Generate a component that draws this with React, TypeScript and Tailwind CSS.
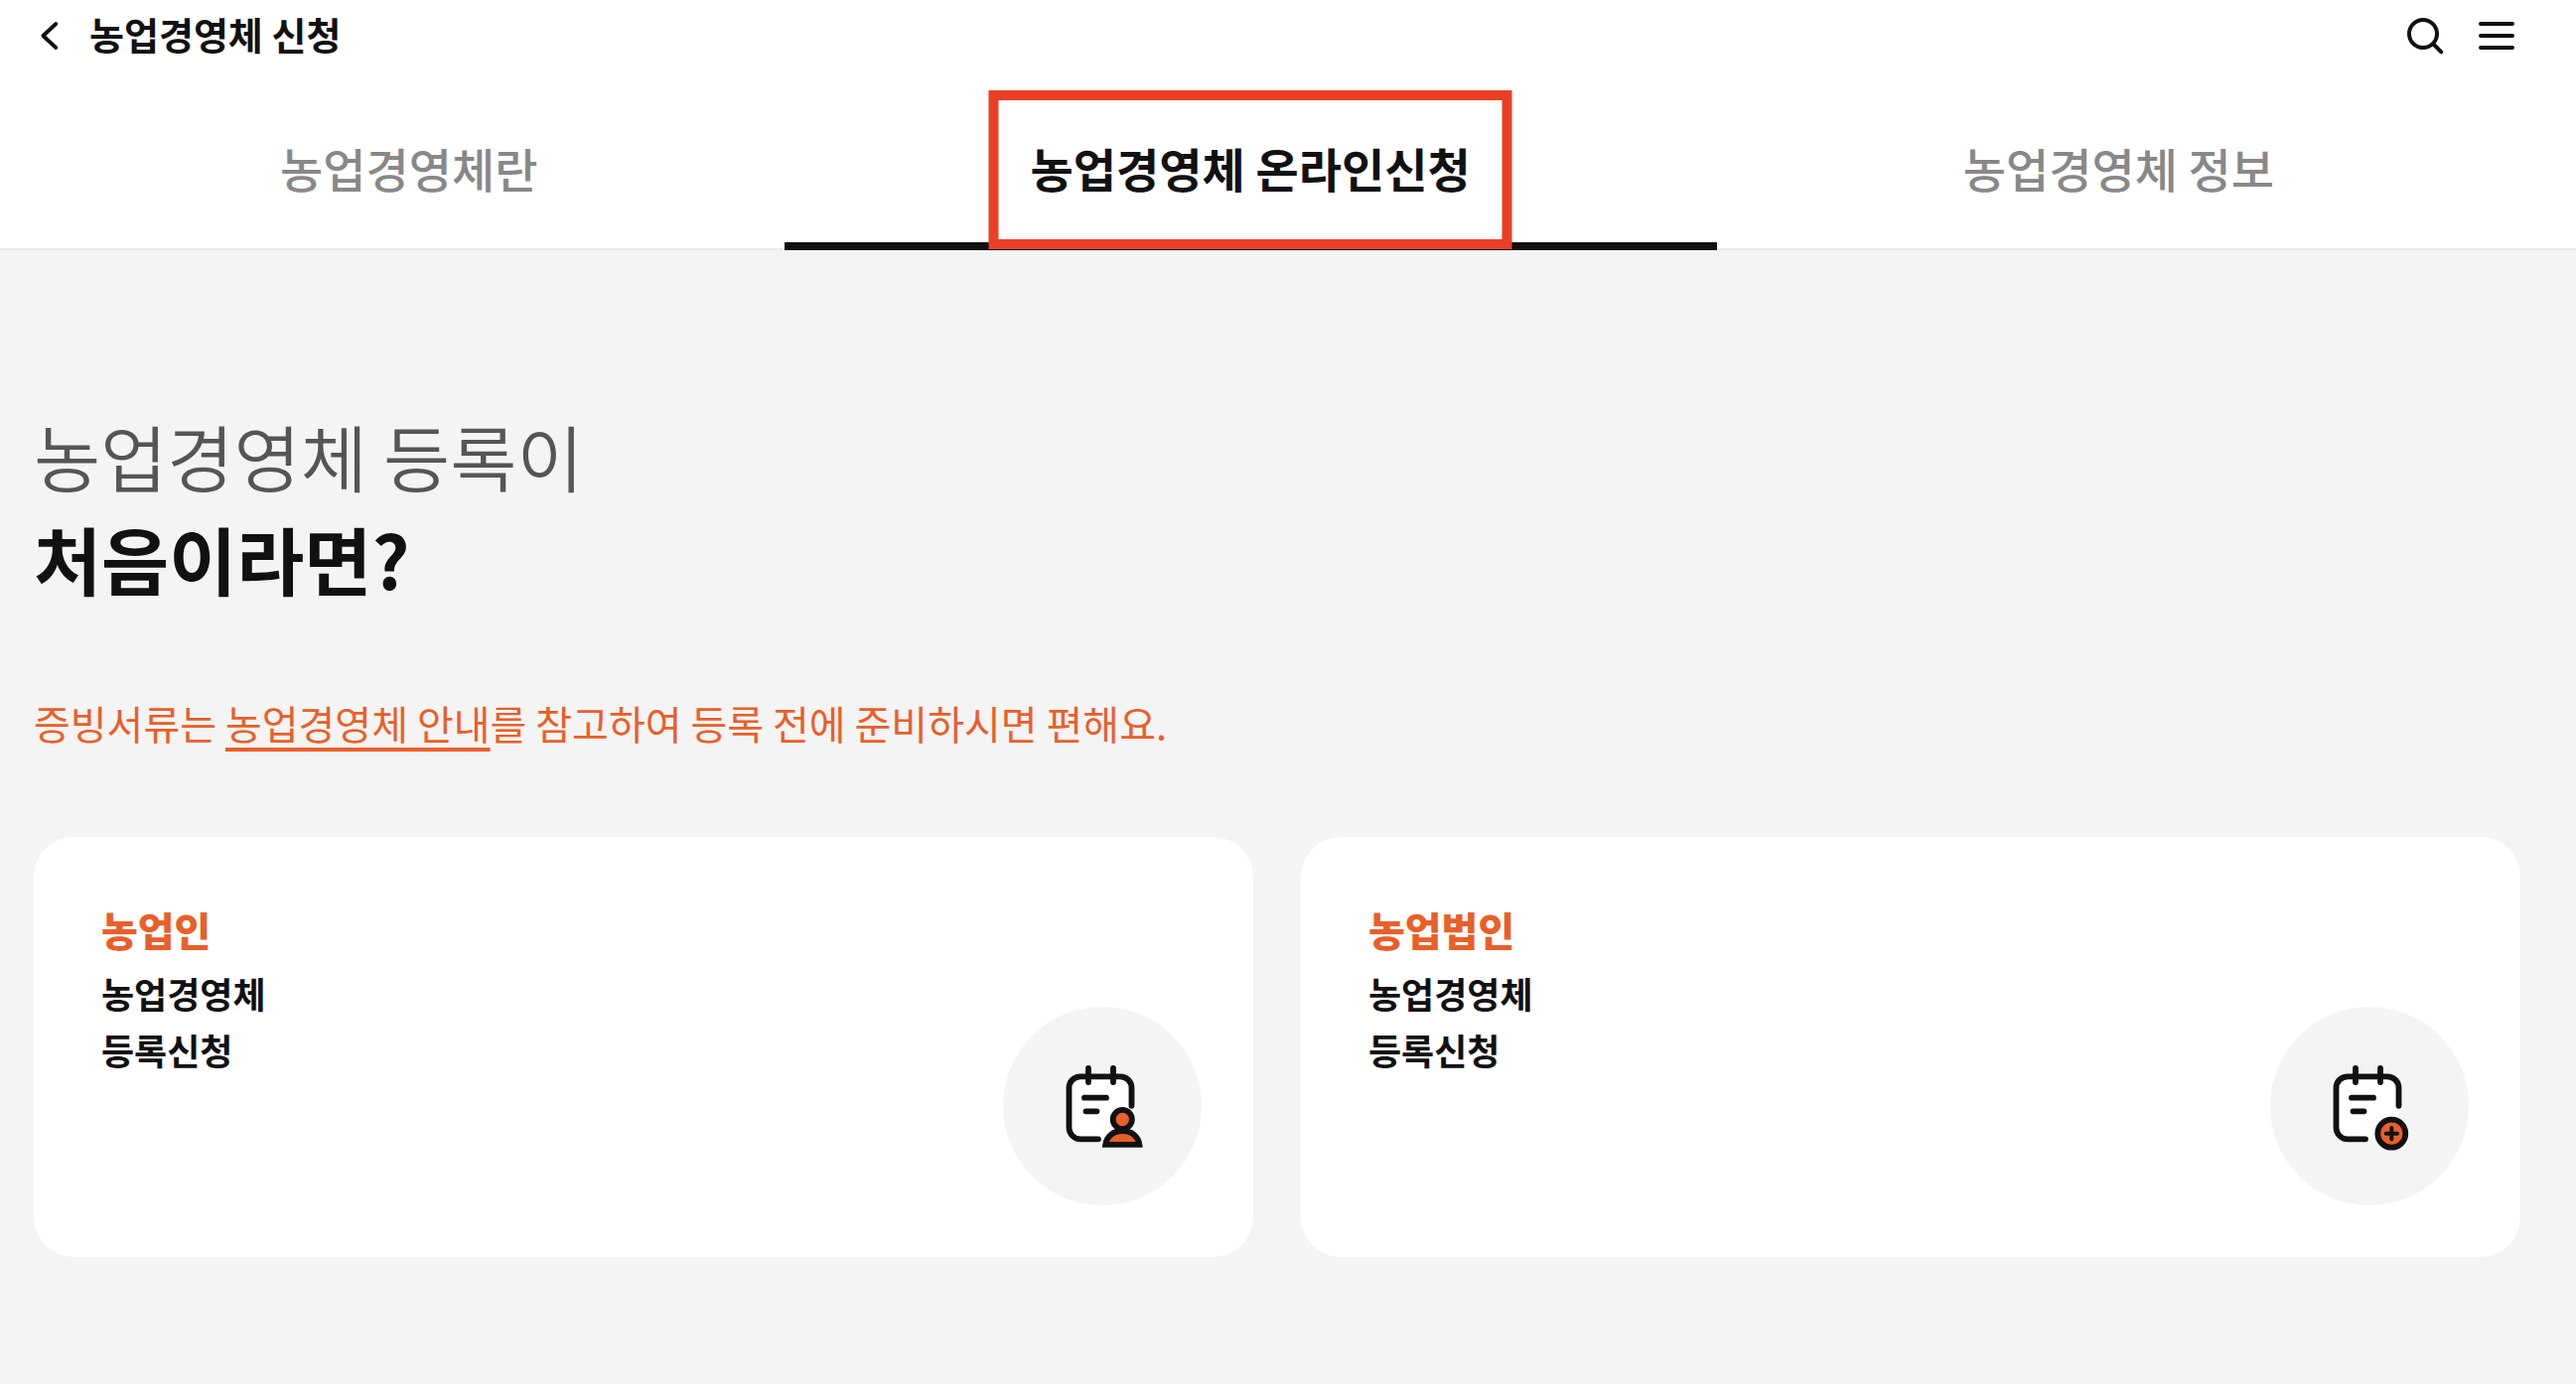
type Kind = "person" | "plus";

const tabs = [
  { label: "농업경영체란", href: "#about" },
  { label: "농업경영체 온라인신청", href: "#online", active: true },
  { label: "농업경영체 정보", href: "#info" },
];

const cards: { title: string; kind: Kind }[] = [
  { title: "농업인", kind: "person" },
  { title: "농업법인", kind: "plus" },
];

function BackIcon() {
  return (
    <svg width="24" height="32" viewBox="0 0 24 32" fill="none" stroke="#111" strokeWidth="3.8" strokeLinecap="round" strokeLinejoin="round" aria-hidden="true">
      <path d="M20.3 4L7.4 16L20.3 28" />
    </svg>
  );
}

function SearchIcon() {
  return (
    <svg width="40" height="40" viewBox="0 0 40 40" fill="none" stroke="#111" strokeWidth="4" strokeLinecap="round" aria-hidden="true">
      <circle cx="18" cy="18" r="14" />
      <path d="M28.5 28.5L36.3 36.3" />
    </svg>
  );
}

function MenuIcon() {
  return (
    <svg width="40" height="40" viewBox="0 0 40 40" fill="none" stroke="#111" strokeWidth="4" strokeLinecap="round" aria-hidden="true">
      <path d="M4 8H36M4 20H36M4 32H36" />
    </svg>
  );
}

function DocumentIcon({ kind }: { kind: Kind }) {
  return (
    <svg className="size-full" viewBox="0 0 200 200" fill="none" stroke="#111" strokeWidth="5.8" strokeLinecap="round" aria-hidden="true">
      <rect x="66.5" y="70.3" width="63" height="63" rx="11.5" fill="#fff" stroke="none" />
      <path d="M96 133.3H78A11.5 11.5 0 0 1 66.5 121.8V81.8A11.5 11.5 0 0 1 78 70.3H118A11.5 11.5 0 0 1 129.5 81.8V99.8" />
      <path d="M86 62V76M111 62V76M82 91.7H104M83.5 105.3H94.5" />
      {kind === "person" ? (
        <g fill="#e95f2a">
          <path d="M103.2 138.8C104.2 131 111 125 120.3 125C129.6 125 136.4 131 137.400 138.8Z" />
          <circle cx="120.3" cy="113.5" r="9.6" />
        </g>
      ) : (
        <g fill="#e95f2a">
          <circle cx="122.3" cy="127.7" r="14" />
          <path d="M122.3 122V133.400M116.600 127.7H128" strokeWidth="4" />
        </g>
      )}
    </svg>
  );
}

function Card({ title, kind }: { title: string; kind: Kind }) {
  return (
    <a href="#apply" className="flex min-h-[423px] justify-between rounded-[40px] bg-white pt-[61px] pr-[52px] pb-[52px] pl-[68px]">
      <span className="text-[36px] leading-[57px] font-bold">
        <strong className="mb-1 block text-[40px] leading-[64px] text-[#e95f2a]">{title}</strong>
        농업경영체
        <br />
        등록신청
      </span>
      <span className="size-[200px] self-end rounded-full bg-[#f4f4f4]">
        <DocumentIcon kind={kind} />
      </span>
    </a>
  );
}

export default function App() {
  return (
    <div className="flex min-h-screen flex-col bg-white font-['Noto_Sans_CJK_KR',sans-serif] text-[#111]">
      <header className="flex h-[72px] items-center justify-between pr-[60px] pl-9">
        <div className="flex items-center gap-[30px]">
          <button type="button" aria-label="뒤로">
            <BackIcon />
          </button>
          <h1 className="pb-1 text-[38px] leading-[56px] font-bold">농업경영체 신청</h1>
        </div>
        <div className="flex items-center gap-8">
          <button type="button" aria-label="검색">
            <SearchIcon />
          </button>
          <button type="button" aria-label="메뉴">
            <MenuIcon />
          </button>
        </div>
      </header>

      <nav className="flex border-b-2 border-[#ececec] pt-4 pr-14 pl-[34px] text-[47px] leading-[68px]">
        {tabs.map((tab) =>
          tab.active ? (
            <a key={tab.label} href={tab.href} aria-current="page" className="relative flex-auto py-[47px] text-center font-bold">
              {tab.label}
              <span className="absolute inset-x-0 -bottom-0.5 h-2 bg-[#111]" />
              <span className="absolute top-[3px] -bottom-px left-1/2 w-[527px] -translate-x-1/2 border-10 border-[#e83f25]" />
            </a>
          ) : (
            <a key={tab.label} href={tab.href} className="flex-auto py-[47px] text-center font-medium text-[#888]">
              {tab.label}
            </a>
          ),
        )}
      </nav>

      <main className="grow bg-[#f4f4f4] pt-[154px] pr-14 pb-32 pl-[34px]">
        <h2 className="text-[73px] leading-[104px] font-[350] text-[#555]">
          농업경영체 등록이
          <br />
          <strong className="text-[74px] font-bold text-[#111]">처음이라면?</strong>
        </h2>
        <p className="mt-[84px] text-[40px] leading-[60px] text-[#e95f2a]">
          증빙서류는{" "}
          <a href="#guide" className="underline decoration-4 underline-offset-8">
            농업경영체 안내
          </a>
          를 참고하여 등록 전에 준비하시면 편해요.
        </p>
        <div className="mt-[85px] grid grid-cols-2 gap-12">
          {cards.map((card) => (
            <Card key={card.title} {...card} />
          ))}
        </div>
      </main>
    </div>
  );
}
